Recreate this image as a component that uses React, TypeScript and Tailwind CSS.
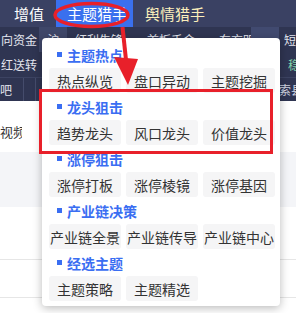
import React from "react";

const sections: { title: string; items: string[] }[] = [
    { title: "主题热点", items: ["热点纵览", "盘口异动", "主题挖掘"] },
    { title: "龙头狙击", items: ["趋势龙头", "风口龙头", "价值龙头"] },
    { title: "涨停狙击", items: ["涨停打板", "涨停棱镜", "涨停基因"] },
    { title: "产业链决策", items: ["产业链全景", "产业链传导", "产业链中心"] },
    { title: "经选主题", items: ["主题策略", "主题精选"] },
];

export default function App() {
    return (
        <div
            className="relative w-[296px] h-[313px] overflow-hidden bg-white"
            style={{ fontFamily: '"Noto Sans CJK SC", "Noto Sans", sans-serif' }}
        >
            {/* Top nav */}
            <header className="h-[27px] bg-[#3a4163] flex items-center text-[15px] leading-none whitespace-nowrap">
                <span className="pl-[14px] text-white">增值</span>
                <div className="ml-[12px] h-full w-[77px] pl-[11px] bg-[#3a70ee] text-white flex items-center">主题猎手</div>
                <span className="ml-[12px] text-[#fbeebb]">舆情猎手</span>
            </header>

            {/* Sub nav */}
            <div className="h-[74px] bg-[#2f3552] text-[12px] text-[#e4e6ef] leading-none flex flex-col whitespace-nowrap overflow-hidden">
                <div className="h-[25px] flex items-center">
                    <span className="w-[40px] pl-[1px] overflow-hidden">向资金</span>
                    <span className="w-[28px] h-full bg-[#3f4769] flex items-center pl-[8px]">沪</span>
                    <span className="w-[187px] pl-[8px] overflow-hidden">红利先锋　　首板千金　　东方明珠</span>
                    <span className="w-[28px] h-full bg-[#414a70]" />
                    <span className="ml-[5px]">短</span>
                </div>
                <div className="h-[25px] flex items-center">
                    <span className="w-[40px] pl-[1px] overflow-hidden">红送转</span>
                    <span className="ml-auto w-[8px] overflow-hidden text-[#7fd1a8]">稳</span>
                </div>
                <div className="flex-1 border-t border-[#3c4362] flex items-center">
                    <span className="w-[24px] h-full flex items-center border-r border-[#454c6c]">吧</span>
                    <span className="w-[12px] h-full border-r border-[#454c6c]" />
                    <span className="ml-auto w-[17px] overflow-hidden text-[#cfd3e0]">索县</span>
                </div>
            </div>

            {/* Page body */}
            <div className="h-[51px] flex items-center pt-[10px] text-[13px] text-[#333]">
                <span className="w-[22px] overflow-hidden whitespace-nowrap">视频</span>
            </div>
            <div className="h-[55px] bg-[#f4f5f8]" />
            <div className="h-[53px] border-b border-[#e6e6e6]" />
            <div className="h-[38px] border-b border-[#e6e6e6]" />

            {/* Dropdown panel */}
            <div className="absolute left-[42px] top-[38px] w-[238px] bg-white rounded-[4px] shadow-[0_2px_10px_rgba(0,0,0,0.28)] pt-[3px] pb-[5px] pl-[7px] pr-[5px]">
                {sections.map((s) => (
                    <div key={s.title}>
                        <div className="h-[27px] flex items-center pl-[8px] gap-[5px]">
                            <span className="w-[5px] h-[5px] bg-[#3a6ef2]" />
                            <span className="text-[14px] font-bold text-[#3a6ef2] leading-none">{s.title}</span>
                        </div>
                        <div className="grid grid-cols-3 gap-[5px]">
                            {s.items.map((it) => (
                                <div
                                    key={it}
                                    className="h-[25px] bg-[#f5f5f6] rounded-[3px] flex items-center justify-center text-[14px] text-[#333] leading-none whitespace-nowrap"
                                >
                                    {it}
                                </div>
                            ))}
                        </div>
                    </div>
                ))}
            </div>

            {/* Annotation overlay */}
            <svg className="absolute inset-0 pointer-events-none" width="296" height="313" viewBox="0 0 296 313">
                <ellipse cx="91.5" cy="15" rx="36.5" ry="11.5" fill="none" stroke="#e8202a" strokeWidth="3.5" />
                <line x1="122.5" y1="27" x2="126" y2="60" stroke="#e8202a" strokeWidth="4" />
                <polygon points="114,57 138,59 128,85" fill="#e8202a" />
                <rect x="40.5" y="90.5" width="231" height="62" fill="none" stroke="#e8202a" strokeWidth="3" />
            </svg>
        </div>
    );
}
